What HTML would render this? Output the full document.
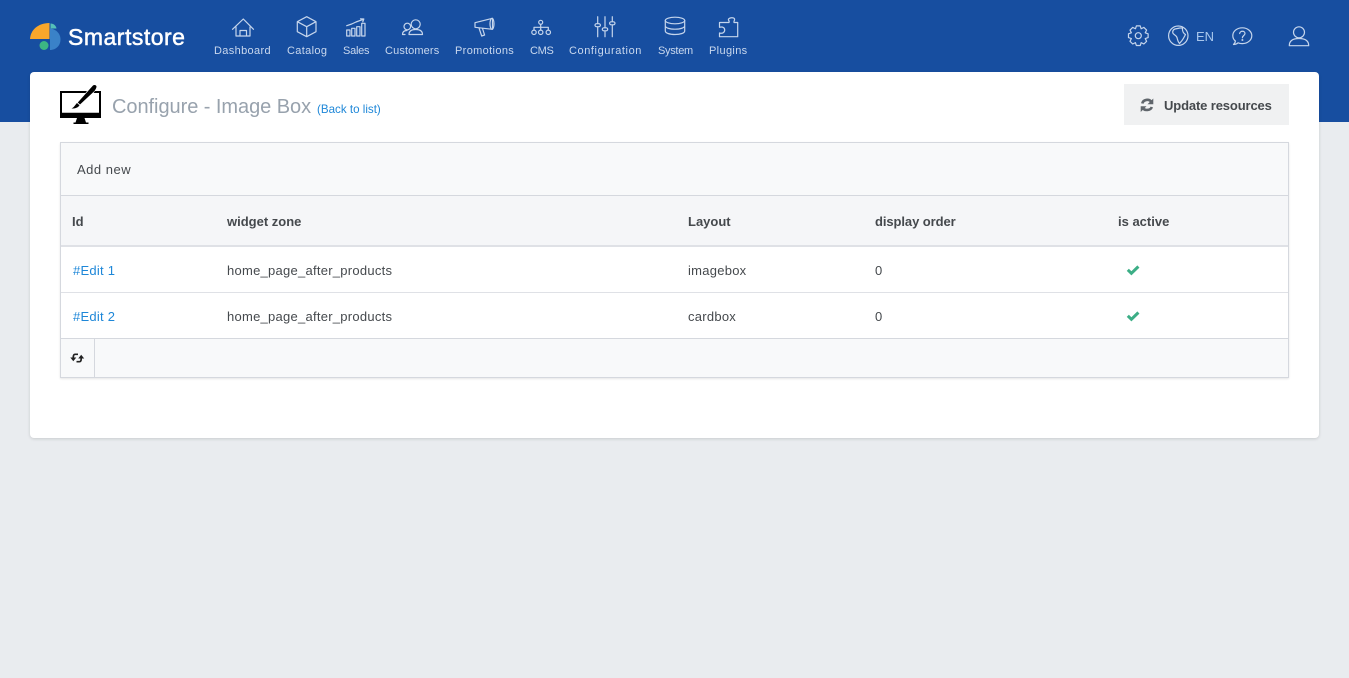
<!DOCTYPE html>
<html lang="en"><head><meta charset="utf-8"><title>Configure - Image Box</title>
<style>
*{box-sizing:border-box}
html,body{margin:0;padding:0;width:1349px;height:678px;overflow:hidden;background:#e9ecef;font-family:"Liberation Sans",sans-serif;color:#3f4448}
.a{position:absolute;white-space:nowrap;line-height:16px}
#hd{position:absolute;left:0;top:0;width:1349px;height:122px;background:#174ea0}
#card{position:absolute;left:30px;top:72px;width:1289px;height:366px;background:#fff;border-radius:4px;box-shadow:0 1px 3px rgba(0,0,0,.14)}
#panel{position:absolute;left:60px;top:142px;width:1229px;height:236px;border:1px solid #d5d8de;box-shadow:0 1px 2px rgba(0,0,0,.1);background:#fff}
.bar{position:absolute;left:61px;width:1227px}
.nav{font-size:11px;color:#c9d8ee;top:43px;letter-spacing:.35px}
.th{font-size:13px;font-weight:700;top:214px;color:#45494d}
.td{font-size:13px;color:#45494d;letter-spacing:.26px}
.lnk{color:#1e87d8}
svg{position:absolute;left:0;top:0;overflow:visible}
</style></head><body>
<div id="hd"></div>
<div id="card"></div>
<div id="panel"></div>
<div class="bar" style="top:143px;height:53px;background:#f8f9fa;border-bottom:1px solid #d5d8de"></div>
<div class="bar" style="top:196px;height:51px;background:#f5f6f8;border-bottom:2px solid #dfe1e6"></div>
<div class="bar" style="top:292px;height:1px;background:#dfe1e6"></div>
<div class="bar" style="top:338px;height:40px;background:#f8f9fa;border-top:1px solid #d5d8de;border-bottom:1px solid #d5d8de"></div>
<div class="a" style="left:94px;top:339px;width:1px;height:38px;background:#d5d8de"></div>
<div class="a" style="left:1124px;top:84px;width:165px;height:41px;background:#f0f1f2"></div>

<svg width="1349" height="678" viewBox="0 0 1349 678" xmlns="http://www.w3.org/2000/svg">
<!-- logo -->
<path d="M30 39C30.500 30 38 23 49.500 23V39Z" fill="#f9a72b"/>
<path d="M50.500 23.500C53.500 23.500 56 25.500 56.500 28.500H50.500Z" fill="#55c0b8"/>
<path d="M50 28.500C56 29 60.500 33.500 60.500 39.500C60.500 45.500 56 50 50 50Z" fill="#3a82c8"/>
<circle cx="44" cy="45.500" r="4.500" fill="#3cb583"/>
<!-- nav icons -->
<g fill="none" stroke="#c5d5ec" stroke-width="1.200" stroke-linejoin="round" stroke-linecap="round">
<path d="M232.500 29.300L243.300 19L253.500 29.300M236 27V36H250V27M240 36V30.500H246.500V36"/>
<path d="M306.700 16.700L316 21.700V31.700L306.700 36.700L297.300 31.700V21.700ZM297.300 21.700L306.700 26.700L316 21.700M306.700 26.700V36.700"/>
<path d="M346.700 30H350V36H346.700ZM351.700 28.300H355V36H351.700ZM356.700 26.700H360V36H356.700ZM361.700 23.300H365V36H361.700ZM346.700 25.700L351.700 24L356 22L363.300 19.300M360.500 18.800L363.800 19L362.800 21.800"/>
<circle cx="415.700" cy="24.300" r="4.500"/><circle cx="407.300" cy="26.500" r="3.300"/>
<path d="M409 34.500C409 30.500 412 29.500 415.700 29.500C419.500 29.500 422.500 30.500 422.500 34.500ZM405 34.500H402.500C402.500 31.500 404.500 30.500 407 30.500"/>
<path d="M475 22.700L492.500 18.300V29.300L475 27.300ZM479 28L481.700 36L484.600 35L482.500 28.500"/>
<ellipse cx="492" cy="23.800" rx="2" ry="5.500"/>
<circle cx="540.700" cy="22.300" r="2"/><circle cx="534" cy="32.300" r="2.200"/><circle cx="540.700" cy="32.300" r="2.200"/><circle cx="548.300" cy="32.300" r="2.200"/>
<path d="M540.700 24.300V30M534 30V27.300H548.300V30"/>
<path d="M597.700 16.700V23.500M597.700 27V36.700M605 16.700V27.500M605 31V36.700M612.300 16.700V21.500M612.300 25V36.700"/>
<rect x="595" y="23.700" width="5.400" height="3" rx="1.500"/><rect x="602.300" y="27.800" width="5.400" height="3" rx="1.500"/><rect x="609.600" y="21.800" width="5.400" height="3" rx="1.500"/>
<ellipse cx="675" cy="20.500" rx="9.700" ry="3.300"/>
<path d="M665.300 20.500V31C665.300 33 669.500 34.500 675 34.500C680.500 34.500 684.700 33 684.700 31V20.500M665.300 25.800C665.300 27.800 669.500 29.200 675 29.200C680.500 29.200 684.700 27.800 684.700 25.800"/>
<path d="M725 22.500H729C729.500 21.500 729 20.800 728.500 20C727.500 17.500 735.500 16.500 734.500 20C734.200 20.800 733.700 21.500 734 22.500H737.700V36.700H719.500V33C723 34 724.700 32 724.700 30C724.700 28 723 26.300 719.500 27.300V22.500H725Z"/>
<!-- right icons -->
<path transform="translate(1138.300 35.700)" d="M9.820-1.910L9.820 1.910L6.930 2.870L8.290 5.590L5.590 8.290L2.870 6.930L1.910 9.820L-1.910 9.820L-2.870 6.930L-5.590 8.290L-8.290 5.590L-6.930 2.870L-9.820 1.910L-9.820-1.910L-6.930-2.870L-8.290-5.590L-5.590-8.290L-2.870-6.930L-1.910-9.820L1.910-9.820L2.870-6.930L5.590-8.290L8.290-5.590L6.930-2.870Z"/>
<circle cx="1138.300" cy="35.700" r="3"/>
<circle cx="1178.300" cy="35.700" r="9.700"/>
<path d="M1175 29C1173.500 29.500 1172.500 31 1172.800 33C1174 35.200 1176 35 1177 37.500C1177.500 40 1178.200 42 1179.500 43.500L1182 40.500C1183.500 38.500 1184.500 36.500 1185.500 34.500C1183.500 33.500 1182 31 1182.500 28L1180 28Z"/>
<path d="M1233.500 44.500C1235.500 44.500 1237 43.800 1238 42.800C1239.200 43.300 1240.700 43.600 1242.300 43.600C1247.500 43.600 1251.800 40.100 1251.800 35.700C1251.800 31.300 1247.500 27.800 1242.300 27.800C1237 27.800 1232.800 31.300 1232.800 35.700C1232.800 37.800 1233.700 39.600 1235.400 41C1235.200 42.500 1234.500 43.700 1233.500 44.500Z"/>
<path d="M1239.700 33.500C1240 30.500 1245 30.500 1245 33.500C1245 35.500 1242.400 35.500 1242.400 37.800"/>
<circle cx="1242.400" cy="40" r=".4"/>
<circle cx="1299" cy="32.300" r="5.500"/>
<path d="M1289.300 45.700C1289.300 40.500 1293 38.500 1299 38.500C1305 38.500 1308.700 40.500 1308.700 45.700Z"/>
</g>
<!-- monitor -->
<path fill-rule="evenodd" d="M60 91H87L85.500 93H62V112.700H99V93H93.500L95 91H101V118H60Z" fill="#000"/>
<path d="M77 118H84.500L86 122.500H88.500V124H73.500V122.500H75.500Z" fill="#000"/>
<path d="M93 85.500C94.300 84.500 96.600 85 96.500 86.800C96.300 88.300 95.500 89.500 94.500 91L80 104.500L77.800 102.500Z" fill="#000"/>
<path d="M77 103L79.500 105.300C78 108 74.500 108.700 71.500 108.500C74 107.500 75 105 77 103Z" fill="#000"/>
<!-- refresh -->
<g fill="none" stroke="#5f656b" stroke-width="2.600">
<path d="M1142.300 103.500C1143.300 99.300 1149 98.800 1151 101.500M1151.800 107C1150.500 110.800 1144.500 110.800 1142.700 108"/>
</g>
<path d="M1153.300 98.500V104.300H1147.500ZM1140.700 112V106.300H1146.500Z" fill="#5f656b"/>
<!-- checks -->
<g fill="none" stroke="#3cae86" stroke-width="3">
<path d="M1127.800 269.800L1131.400 273.300L1138.400 266.500"/>
<path d="M1127.800 315.800L1131.400 319.300L1138.400 312.500"/>
</g>
<!-- pager -->
<g fill="none" stroke="#222" stroke-width="1.700">
<path d="M78 354.300H75C73.800 354.300 73.300 355.300 73.300 357.500M76.500 361.700H79.500C80.700 361.700 81.200 360.700 81.200 358.500"/>
</g>
<path d="M70.300 357.500H76.300L73.300 361.300ZM78.200 358.500H84.200L81.200 354.700Z" fill="#222"/>
</svg>

<div class="a" style="left:68px;top:22px;font-size:23px;line-height:30px;font-weight:400;color:#fff;letter-spacing:.5px;-webkit-text-stroke:.5px #fff">Smartstore</div>

<div class="a nav" style="left:214px">Dashboard</div>
<div class="a nav" style="left:287px">Catalog</div>
<div class="a nav" style="left:343px;letter-spacing:-.25px">Sales</div>
<div class="a nav" style="left:385px;letter-spacing:.13px">Customers</div>
<div class="a nav" style="left:455px">Promotions</div>
<div class="a nav" style="left:530px;letter-spacing:-.3px">CMS</div>
<div class="a nav" style="left:569px;letter-spacing:.58px">Configuration</div>
<div class="a nav" style="left:658px;letter-spacing:-.3px">System</div>
<div class="a nav" style="left:709px">Plugins</div>
<div class="a" style="left:1196px;top:29px;font-size:13px;color:#a9c7ec">EN</div>

<div class="a" style="left:112px;top:95px;font-size:20px;line-height:24px;color:#98a2ad;letter-spacing:-.05px">Configure - Image Box</div>
<div class="a lnk" style="left:317px;top:102px;font-size:11.600px">(Back to list)</div>
<div class="a" style="left:1164px;top:98px;font-size:13px;font-weight:700;color:#45494d;letter-spacing:-.13px">Update resources</div>

<div class="a" style="left:77px;top:162px;font-size:13px;color:#45494d;letter-spacing:.5px">Add new</div>
<div class="a th" style="left:72px">Id</div>
<div class="a th" style="left:227px">widget zone</div>
<div class="a th" style="left:688px">Layout</div>
<div class="a th" style="left:875px;letter-spacing:-.08px">display order</div>
<div class="a th" style="left:1118px">is active</div>

<div class="a td lnk" style="left:73px;top:263px">#Edit 1</div>
<div class="a td" style="left:227px;top:263px">home_page_after_products</div>
<div class="a td" style="left:688px;top:263px">imagebox</div>
<div class="a td" style="left:875px;top:263px">0</div>
<div class="a td lnk" style="left:73px;top:309px">#Edit 2</div>
<div class="a td" style="left:227px;top:309px">home_page_after_products</div>
<div class="a td" style="left:688px;top:309px">cardbox</div>
<div class="a td" style="left:875px;top:309px">0</div>
</body></html>
